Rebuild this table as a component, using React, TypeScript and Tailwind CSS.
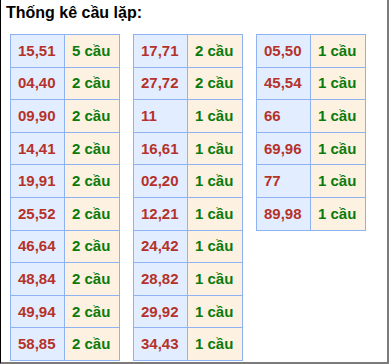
import { FC } from 'react'

type Row = [string, string]

const cols: Row[][] = [
  [
    ['15,51', '5 cầu'],
    ['04,40', '2 cầu'],
    ['09,90', '2 cầu'],
    ['14,41', '2 cầu'],
    ['19,91', '2 cầu'],
    ['25,52', '2 cầu'],
    ['46,64', '2 cầu'],
    ['48,84', '2 cầu'],
    ['49,94', '2 cầu'],
    ['58,85', '2 cầu'],
  ],
  [
    ['17,71', '2 cầu'],
    ['27,72', '2 cầu'],
    ['11', '1 cầu'],
    ['16,61', '1 cầu'],
    ['02,20', '1 cầu'],
    ['12,21', '1 cầu'],
    ['24,42', '1 cầu'],
    ['28,82', '1 cầu'],
    ['29,92', '1 cầu'],
    ['34,43', '1 cầu'],
  ],
  [
    ['05,50', '1 cầu'],
    ['45,54', '1 cầu'],
    ['66', '1 cầu'],
    ['69,96', '1 cầu'],
    ['77', '1 cầu'],
    ['89,98', '1 cầu'],
  ],
]

const LapTable: FC<{ rows: Row[] }> = ({ rows }) => (
  <table className="border-collapse w-[110px] shrink-0 table-fixed">
    <tbody>
      {rows.map(([pair, count]) => (
        <tr key={pair} className="h-[32.6px]">
          <td className="w-[54px] border border-[#8fb3f2] bg-[#e2eeff] pl-[7px] p-0 text-[#b5322a]">
            {pair}
          </td>
          <td className="border border-[#8fb3f2] bg-[#fdf2e1] pl-[7px] p-0 text-[#0b7a0b]">
            {count}
          </td>
        </tr>
      ))}
    </tbody>
  </table>
)

export default function App() {
  return (
    <div
      className="w-[389px] h-[364px] bg-white border-l border-l-black border-r-2 border-b-2 border-r-[#7b7b7b] border-b-[#7b7b7b] overflow-hidden"
      style={{ fontFamily: '"Liberation Sans", Arial, sans-serif' }}
    >
      <div className="pl-[5px] pt-[4px] text-[16px] leading-[18px] font-bold text-black">
        Thống kê cầu lặp:
      </div>
      <div className="flex items-start gap-[13px] pl-[9px] mt-[12px] text-[15px] font-bold leading-[18px]">
        <LapTable rows={cols[0]} />
        <LapTable rows={cols[1]} />
        <LapTable rows={cols[2]} />
      </div>
    </div>
  )
}
